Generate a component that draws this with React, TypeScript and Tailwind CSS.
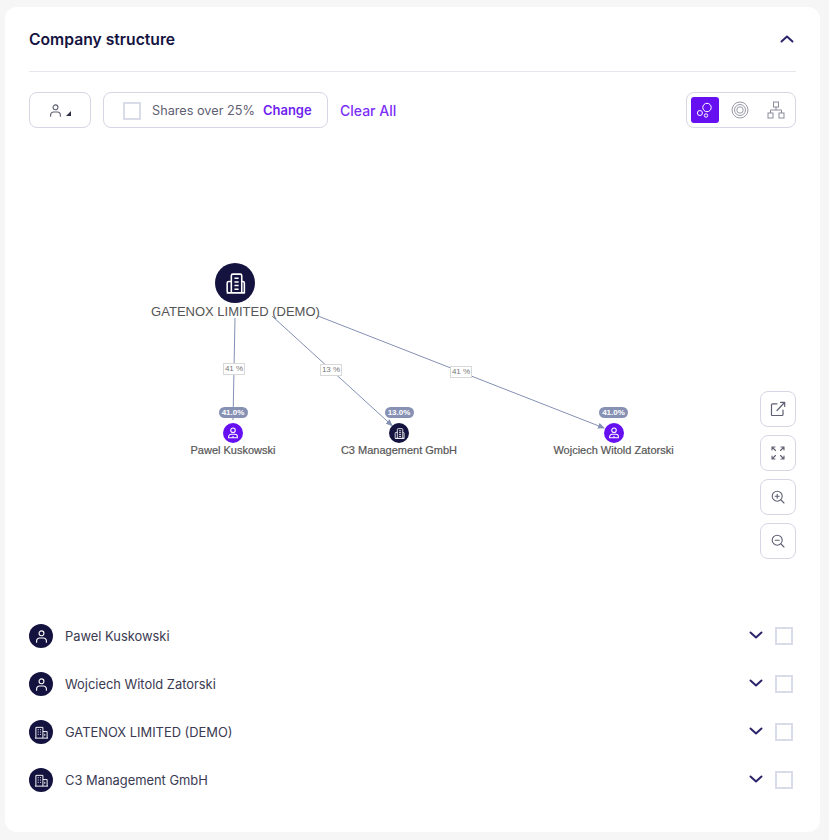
const edgeColor = "#8590b5";

function PersonIcon({ className = "" }: { className?: string }) {
  return (
    <svg viewBox="0 0 16 16" fill="none" stroke="currentColor" strokeWidth="1.2" className={className}>
      <circle cx="8" cy="4.6" r="2.6" />
      <path d="M2.8 14v-1.4a3 3 0 0 1 3-3h4.4a3 3 0 0 1 3 3V14" strokeLinecap="round" />
    </svg>
  );
}

function BuildingIcon({ className = "" }: { className?: string }) {
  return (
    <svg viewBox="0 0 16 16" fill="none" stroke="currentColor" strokeWidth="1" className={className}>
      <path d="M2 14V2.5h7.5V14M9.5 7H14v7M1 14h14" />
      <path d="M4 5h1M6.500 5h1M4 7.500h1M6.500 7.500h1M4 10h1M6.500 10h1M11.500 9.500v2" />
    </svg>
  );
}

function TowerIcon({ className = "" }: { className?: string }) {
  return (
    <svg viewBox="0 0 24 24" fill="none" stroke="currentColor" strokeWidth="1.5" strokeLinejoin="round" className={className}>
      <path d="M8 21V4.500A1.500 1.500 0 0 1 9.500 3h7A1.500 1.500 0 0 1 18 4.500V21" />
      <path d="M8 10H5.500A1.500 1.500 0 0 0 4 11.500V19.500A1.500 1.500 0 0 0 5.500 21H20.500V11.500A1.500 1.500 0 0 0 19 10H18M3.500 21H21" />
      <path d="M11 7h4M11 10.500h4M11 14h4M11 17.500h4" />
    </svg>
  );
}

function NodePersonIcon({ className = "" }: { className?: string }) {
  return (
    <svg viewBox="0 0 16 16" fill="none" stroke="currentColor" strokeWidth="1.2" className={className}>
      <circle cx="8" cy="4.800" r="2.600" />
      <path d="M3 13.500v-1.300a2.700 2.700 0 0 1 2.700-2.700h4.600a2.700 2.700 0 0 1 2.700 2.700v1.300z" />
      <path d="M8 11.500v2" />
    </svg>
  );
}

function Chevron({ up = false }: { up?: boolean }) {
  return (
    <svg width="14" height="8" viewBox="0 0 14 8" fill="none" stroke="#2c2569" strokeWidth="2" strokeLinecap="round" strokeLinejoin="round">
      <path d={up ? "M1.500 6.500 7 1.500l5.500 5" : "M1.500 1.500 7 6.500l5.500-5"} />
    </svg>
  );
}

function Checkbox() {
  return <span className="block h-[18px] w-[18px] border-2 border-[#d9dce9] bg-white" />;
}

function ToolButton({ children }: { children: React.ReactNode }) {
  return (
    <button className="flex h-9 w-9 items-center justify-center rounded-lg border border-[#d5d7e5] bg-white text-[#5f6072]">
      {children}
    </button>
  );
}

const nodes = [
  { name: "Pawel Kuskowski", x: 233, pct: "41.0%", kind: "person" },
  { name: "C3 Management GmbH", x: 399, pct: "13.0%", kind: "company" },
  { name: "Wojciech Witold Zatorski", x: 613.5, pct: "41.0%", kind: "person" },
];

const edgeLabels = [
  { text: "41 %", x: 234, y: 368.5 },
  { text: "13 %", x: 331, y: 370 },
  { text: "41 %", x: 461, y: 371.5 },
];

const rows = [
  { name: "Pawel Kuskowski", kind: "person" },
  { name: "Wojciech Witold Zatorski", kind: "person" },
  { name: "GATENOX LIMITED (DEMO)", kind: "company" },
  { name: "C3 Management GmbH", kind: "company" },
];

function Graph() {
  return (
    <div className="relative h-[484px] font-['Liberation_Sans',sans-serif]">
      <svg className="absolute inset-0" width="767" height="484" viewBox="29 128 767 484" fill="none">
        <defs>
          <marker id="arrow" markerWidth="7" markerHeight="6" refX="6" refY="3" orient="auto">
            <path d="M0 0 7 3 0 6z" fill={edgeColor} />
          </marker>
        </defs>
        <path d="M235 318 233 420" stroke={edgeColor} strokeWidth="1" />
        <path d="M272 316 392 425.5" stroke={edgeColor} strokeWidth="1" markerEnd="url(#arrow)" />
        <path d="M318 316 604 428" stroke={edgeColor} strokeWidth="1" markerEnd="url(#arrow)" />
      </svg>

      {/* root node */}
      <div className="absolute left-[186px] top-[135px] flex h-10 w-10 items-center justify-center rounded-full bg-[#14133f] text-white">
        <TowerIcon className="h-[25px] w-[25px]" />
      </div>
      <div className="absolute left-[206.5px] top-[175px] -translate-x-1/2 whitespace-nowrap text-[13px] leading-[18px] text-[#555555]">
        GATENOX LIMITED (DEMO)
      </div>

      {edgeLabels.map((e) => (
        <div
          key={e.x}
          className="absolute flex h-[12px] w-[22px] -translate-x-1/2 -translate-y-1/2 items-center justify-center border border-[#d8d8d8] bg-white text-[8px] leading-none text-[#777777]"
          style={{ left: e.x - 29, top: e.y - 128 }}
        >
          {e.text}
        </div>
      ))}

      {nodes.map((n) => (
        <div key={n.name} className="absolute top-[279px] flex w-[160px] -translate-x-1/2 flex-col items-center" style={{ left: n.x - 29 }}>
          <span className="flex h-[11px] w-[29px] items-center justify-center rounded-full bg-[#8791b3] text-[8px] font-bold leading-none text-white">
            {n.pct}
          </span>
          <span
            className={`mt-[5px] flex h-[20px] w-[20px] items-center justify-center rounded-full text-white ${
              n.kind === "person" ? "bg-[#6610f2]" : "bg-[#14133f]"
            }`}
          >
            {n.kind === "person" ? <NodePersonIcon className="h-[14px] w-[14px]" /> : <TowerIcon className="h-[13px] w-[13px]" />}
          </span>
          <span className="whitespace-nowrap text-[11px] leading-[14px] text-[#555555] [-webkit-text-stroke:0.2px_#555555]">{n.name}</span>
        </div>
      ))}

      {/* zoom controls */}
      <div className="absolute right-0 top-[263px] flex flex-col gap-2">
        <ToolButton>
          <svg width="16" height="16" viewBox="0 0 16 16" fill="none" stroke="currentColor" strokeWidth="1.2" strokeLinecap="round" strokeLinejoin="round">
            <path d="M7 2.800H2.500a1 1 0 0 0-1 1V14a.5.5 0 0 0 .5.5h10a1 1 0 0 0 1-1V9M7 9.500 14.500 1.500M10.500 1.300h4.200v4.200" />
          </svg>
        </ToolButton>
        <ToolButton>
          <svg width="14" height="14" viewBox="0 0 14 14" fill="none" stroke="currentColor" strokeWidth="1.1" strokeLinecap="round" strokeLinejoin="round">
            <path d="M1 4V1h3M1 1l3.500 3.500M13 4V1h-3M13 1 9.500 4.500M1 10v3h3M1 13l3.500-3.500M13 10v3h-3M13 13 9.500 9.500" />
          </svg>
        </ToolButton>
        <ToolButton>
          <svg width="14" height="14" viewBox="0 0 14 14" fill="none" stroke="currentColor" strokeWidth="1.1" strokeLinecap="round">
            <circle cx="6.200" cy="6.200" r="5" />
            <path d="m10 10 3 3M4.200 6.200h4M6.200 4.200v4" />
          </svg>
        </ToolButton>
        <ToolButton>
          <svg width="14" height="14" viewBox="0 0 14 14" fill="none" stroke="currentColor" strokeWidth="1.1" strokeLinecap="round">
            <circle cx="6.200" cy="6.200" r="5" />
            <path d="m10 10 3 3M4.200 6.200h4" />
          </svg>
        </ToolButton>
      </div>
    </div>
  );
}

export default function App() {
  return (
    <main className="min-h-[840px] bg-[#f6f6f7] pl-[5px] pr-[9px] pt-[7px] font-['Inter',sans-serif]">
      <section className="h-[825px] rounded-xl bg-white px-6">
        <header className="flex h-[65px] items-center justify-between border-b border-[#e6e7ee] pb-[1px]">
          <h2 className="mt-[2px] text-[15.7px] font-semibold text-[#14133f]">Company structure</h2>
          <span className="mr-[2px]">
            <Chevron up />
          </span>
        </header>

        <div className="mt-5 flex h-9 items-center">
          <button className="flex h-9 w-[62px] items-center justify-center gap-[3px] rounded-lg border border-[#d5d7e5] bg-white pr-[2px] text-[#5f6072]">
            <PersonIcon className="h-[15px] w-[15px]" />
            <span className="mt-[7px] h-0 w-0 border-b-[5px] border-l-[5px] border-b-[#2d2d44] border-l-transparent" />
          </button>
          <div className="ml-3 flex h-9 w-[225px] items-center rounded-lg border border-[#d5d7e5] bg-white pl-[19px] pt-[1px]">
            <Checkbox />
            <span className="ml-[11px] text-[12.7px] text-[#5f6072]">Shares over 25%</span>
            <span className="ml-[8px] text-[13px] font-semibold text-[#6f1ff0]">Change</span>
          </div>
          <span className="ml-3 text-[14px] font-medium text-[#7b2ff7]">Clear All</span>

          <div className="ml-auto flex h-9 w-[110px] items-center rounded-lg border border-[#d5d7e5] bg-white pl-1">
            <span className="flex h-[26px] w-[28px] items-center justify-center rounded-[3px] bg-[#6610f2] text-white">
              <svg width="18" height="18" viewBox="0 0 18 18" fill="none" stroke="currentColor" strokeWidth="1">
                <circle cx="11" cy="6.500" r="4.200" />
                <circle cx="3.900" cy="12" r="2.500" />
                <circle cx="10" cy="14.500" r="1.700" />
              </svg>
            </span>
            <span className="ml-[12px] text-[#9a9aa8]">
              <svg width="18" height="18" viewBox="0 0 18 18" fill="none" stroke="currentColor" strokeWidth="1">
                <circle cx="9" cy="9" r="8" />
                <circle cx="9" cy="9" r="5.500" />
                <circle cx="9" cy="9" r="3.200" />
              </svg>
            </span>
            <span className="ml-[18px] text-[#8b8b9b]">
              <svg width="18" height="18" viewBox="0 0 18 18" fill="none" stroke="currentColor" strokeWidth="1">
                <rect x="6.500" y="1" width="5" height="5" />
                <rect x="1" y="12" width="5" height="5" />
                <rect x="12" y="12" width="5" height="5" />
                <path d="M9 6v3M3.500 12V9h11v3" />
              </svg>
            </span>
          </div>
        </div>

        <Graph />

        <ul>
          {rows.map((r) => (
            <li key={r.name} className="flex h-12 items-center">
              <span className="flex h-6 w-6 items-center justify-center rounded-full bg-[#14133f] text-white">
                {r.kind === "person" ? <PersonIcon className="h-[15px] w-[15px]" /> : <BuildingIcon className="h-[15px] w-[15px]" />}
              </span>
              <span className="ml-3 mt-[2px] text-[12.9px] text-[#3a3a52]">{r.name}</span>
              <span className="ml-auto mr-3 mb-[2px] flex">
                <Chevron />
              </span>
              <span className="mr-[3px]">
                <Checkbox />
              </span>
            </li>
          ))}
        </ul>
      </section>
    </main>
  );
}
